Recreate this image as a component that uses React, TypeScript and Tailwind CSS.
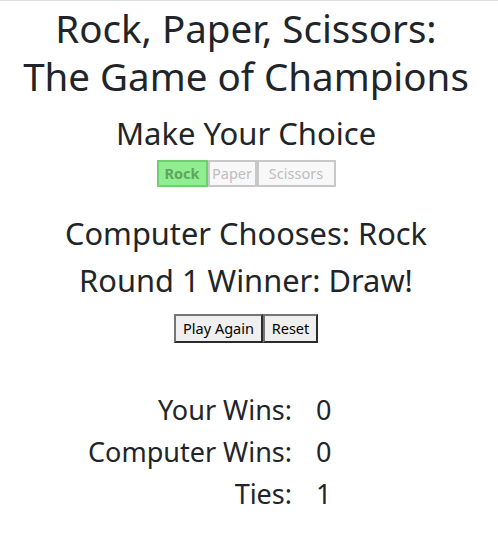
import React from "react";

export default function App() {
  const font = { fontFamily: '"Noto Sans", "Open Sans", sans-serif' };
  return (
    <div className="min-h-[553px] w-full border-t border-[#dedede] bg-white text-[#212529]" style={font}>
      <div className="flex flex-col items-center pr-[6px]">
        <h1 className="mt-[3px] text-center text-[38.5px] leading-[48px] font-normal">
          Rock, Paper, Scissors:
          <br />
          The Game of Champions
        </h1>
        <h2 className="mt-[14px] text-[31px] leading-[38px] font-normal">Make Your Choice</h2>
        <div className="mt-[8px] flex">
          <button className="box-border flex h-[27px] w-[51px] items-center justify-center border-2 border-[#6fcf6f] bg-[#90ee90] text-[14.5px] font-bold text-[#5ea65e]">
            Rock
          </button>
          <button className="box-border flex h-[27px] w-[49px] items-center justify-center border-2 border-[#c8c8c8] bg-[#f8f8f8] text-[14.5px] text-[#bdbdbd]">
            Paper
          </button>
          <button className="box-border flex h-[27px] w-[79px] items-center justify-center border-2 border-[#c8c8c8] bg-[#f8f8f8] text-[14.5px] text-[#bdbdbd]">
            Scissors
          </button>
        </div>
        <h2 className="mt-[27px] text-[30.8px] leading-[38px] font-normal">Computer Chooses: Rock</h2>
        <h2 className="mt-[9px] text-[30.8px] leading-[38px] font-normal">Round 1 Winner: Draw!</h2>
        <div className="mt-[15px] flex">
          <button className="box-border flex h-[29px] w-[89px] items-center justify-center border-2 border-t-[#767676] border-l-[#767676] border-r-[#2b2b2b] border-b-[#2b2b2b] bg-[#efefef] text-[14.5px] text-black">
            Play Again
          </button>
          <button className="box-border flex h-[29px] w-[55px] items-center justify-center border-2 border-t-[#767676] border-l-[#767676] border-r-[#2b2b2b] border-b-[#2b2b2b] bg-[#efefef] text-[14.5px] text-black">
            Reset
          </button>
        </div>
      </div>
      <div className="mt-[50px] grid grid-cols-[292px_1fr] gap-y-[8px] text-[27px] leading-[34px]">
        <div className="text-right">Your Wins:</div>
        <div className="pl-[24px]">0</div>
        <div className="text-right">Computer Wins:</div>
        <div className="pl-[24px]">0</div>
        <div className="text-right">Ties:</div>
        <div className="pl-[24px]">1</div>
      </div>
    </div>
  );
}
